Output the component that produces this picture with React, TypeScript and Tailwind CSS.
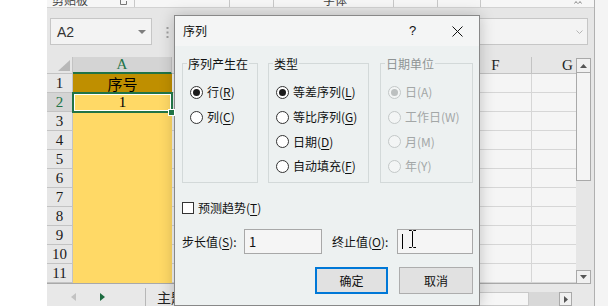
import React from "react";

const COLS = ["B", "C", "D", "E", "F", "G"];
const ROWS = [1, 2, 3, 4, 5, 6, 7, 8, 9, 10, 11];

function Ul({ children }: { children: React.ReactNode }) {
  return <span className="underline underline-offset-[2px] decoration-[1px]">{children}</span>;
}

function Radio({
  checked = false,
  disabled = false,
  children,
}: {
  checked?: boolean;
  disabled?: boolean;
  children: React.ReactNode;
}) {
  return (
    <div className="flex items-center h-[24.7px]">
      <span
        className={
          disabled
            ? "flex items-center justify-center w-[13px] h-[13px] shrink-0 rounded-full border border-[#c3c8c8] bg-[#f3f5f5]"
            : "flex items-center justify-center w-[13px] h-[13px] shrink-0 rounded-full border border-[#333333] bg-white"
        }
      >
        {checked ? (
          <span className={disabled ? "w-[7px] h-[7px] rounded-full bg-[#bcc0c0]" : "w-[7px] h-[7px] rounded-full bg-[#1b1b1b]"} />
        ) : null}
      </span>
      <span
        className={
          disabled
            ? "ml-[4px] leading-[16px] text-[#a3a7a7] whitespace-nowrap"
            : "ml-[4px] leading-[16px] text-[#111] whitespace-nowrap"
        }
      >
        {children}
      </span>
    </div>
  );
}

function Group({
  title,
  disabled = false,
  className,
  children,
}: {
  title: string;
  disabled?: boolean;
  className: string;
  children: React.ReactNode;
}) {
  return (
    <div className={"relative h-[120px] shrink-0 border border-[#d3d9d9] pt-[16px] pl-[7px] " + className}>
      <span
        className={
          disabled
            ? "absolute left-[4px] -top-[9px] px-[1px] bg-[#edf1f1] leading-[17px] text-[#8f9494] whitespace-nowrap"
            : "absolute left-[4px] -top-[9px] px-[1px] bg-[#edf1f1] leading-[17px] text-[#111] whitespace-nowrap"
        }
      >
        {title}
      </span>
      {children}
    </div>
  );
}

function RibbonStrip() {
  return (
    <div className="h-[8px] shrink-0 flex items-end overflow-hidden bg-[#f6f6f6] border-b border-[#d2d2d2] text-[12px] leading-[14px] text-[#444] font-['Noto_Sans_CJK_SC',sans-serif]">
      <span className="ml-[5px] whitespace-nowrap">剪贴板</span>
      <svg className="ml-[32px] mb-[2px]" width="7" height="6" viewBox="0 0 7 6">
        <path d="M0.5 0.5 H4 M0.5 0.5 V5.5 H6.5 V2" stroke="#777" fill="none" />
      </svg>
      <span className="ml-[7px] w-px h-full bg-[#c8c8c8]" />
      <span className="ml-[94px] w-px h-full bg-[#c8c8c8]" />
      <span className="ml-[43px] w-px h-full bg-[#c8c8c8]" />
      <span className="ml-[49px] whitespace-nowrap">字体</span>
      <span className="ml-[46px] w-px h-full bg-[#c8c8c8]" />
      <span className="ml-[43px] w-px h-full bg-[#c8c8c8]" />
      <span className="ml-[42px] w-px h-full bg-[#c8c8c8]" />
      <svg className="ml-[93px] mb-[3px]" width="8" height="4" viewBox="0 0 8 4">
        <path d="M0.5 3.5 L2 1.5 L3.5 3.5 M4.5 3.5 L6 1.5 L7.5 3.5" stroke="#888" fill="none" />
      </svg>
    </div>
  );
}

function FormulaBar() {
  return (
    <div className="h-[49px] shrink-0 flex items-start pt-[10px]">
      <div className="ml-[3px] w-[102px] h-[27px] flex items-center border border-[#c6c6c6] bg-[#f3f3f3] pl-[6px]">
        <span className="text-[14px] leading-[16px] text-[#333] font-['Liberation_Sans',Arial,sans-serif]">A2</span>
        <svg className="ml-auto mr-[5px]" width="8" height="4" viewBox="0 0 8 4">
          <path d="M0 0 H8 L4 4 Z" fill="#7e7e7e" />
        </svg>
      </div>
      <svg className="ml-[14px] mt-[9px]" width="3" height="11" viewBox="0 0 3 11">
        <rect x="0.5" y="0" width="2" height="2" fill="#a0a0a0" />
        <rect x="0.5" y="4.5" width="2" height="2" fill="#a0a0a0" />
        <rect x="0.5" y="9" width="2" height="2" fill="#a0a0a0" />
      </svg>
      <div className="ml-[10px] mr-[6px] flex-1 h-[27px] flex items-center justify-end border border-[#c6c6c6] bg-[#f3f3f3] pr-[4px]">
        <svg width="7" height="4" viewBox="0 0 7 4">
          <path d="M0.5 0.5 L3.5 3.5 L6.5 0.5" stroke="#b5b5b5" fill="none" />
        </svg>
      </div>
    </div>
  );
}

function Sheet() {
  return (
    <div className="w-[529px] h-[227px] shrink-0 overflow-hidden border-b border-[#a9a9a9]">
      <div className="grid w-[557px] grid-cols-[26px_99px_repeat(6,72px)] grid-rows-[17px_repeat(11,19px)]">
        <div className="relative bg-[#e6e6e6] border-r border-b border-[#c3c3c3]">
          <svg className="absolute right-[2px] bottom-[2px]" width="12" height="11" viewBox="0 0 12 11">
            <path d="M12 0 L12 11 L0 11 Z" fill="#b8b8b8" />
          </svg>
        </div>
        <div className="flex items-center justify-center bg-[#d4d4d4] border-r border-[#c3c3c3] border-b-2 border-b-[#217346] text-[15px] leading-none text-[#217346] font-['Liberation_Serif',serif]">
          A
        </div>
        {COLS.map((c) => (
          <div
            key={c}
            className="flex items-center justify-center bg-[#e6e6e6] border-r border-b border-[#c3c3c3] text-[15px] leading-none text-[#222] font-['Liberation_Serif',serif]"
          >
            {c}
          </div>
        ))}
        {ROWS.map((r) => (
          <React.Fragment key={r}>
            <div
              className={
                r === 2
                  ? "flex items-center justify-center bg-[#d4d4d4] border-r border-b border-[#c3c3c3] text-[15px] leading-none text-[#217346] font-['Liberation_Serif',serif]"
                  : "flex items-center justify-center bg-[#e6e6e6] border-r border-b border-[#c3c3c3] text-[15px] leading-none text-[#1a1a1a] font-['Liberation_Serif',serif]"
              }
            >
              {r}
            </div>
            {r === 1 ? (
              <div className="flex items-center justify-center bg-[#bf8f00] text-[15px] leading-none text-black font-['Noto_Sans_CJK_SC',sans-serif]">
                序号
              </div>
            ) : r === 2 ? (
              <div className="relative flex items-center justify-center bg-[#ffd966] text-[15px] leading-none text-black font-['Liberation_Serif',serif]">
                1
                <div className="absolute z-10 -left-[1px] -top-[1px] w-[101px] h-[21px] border-2 border-[#217346] shadow-[inset_0_0_0_1px_#ffffff]">
                  <div className="absolute left-[94px] top-[15px] w-[7px] h-[7px] bg-[#217346] border border-white" />
                </div>
              </div>
            ) : (
              <div className="bg-[#ffd966]" />
            )}
            {COLS.map((c) => (
              <div key={c} className="bg-[#f5f5f5] border-r border-b border-[#d6d6d6]" />
            ))}
          </React.Fragment>
        ))}
      </div>
    </div>
  );
}

function VScroll() {
  return (
    <div className="w-[15px] h-[227px] shrink-0 flex flex-col pt-[1px] bg-[#e6e6e6]">
      <div className="h-[15px] shrink-0 flex items-center justify-center border border-[#a9a9a9] bg-[#f0f0f0]">
        <svg width="7" height="4" viewBox="0 0 7 4">
          <path d="M0 4 L3.5 0 L7 4 Z" fill="#555" />
        </svg>
      </div>
      <div className="h-[108px] shrink-0 border-x border-b border-[#a9a9a9] bg-[#f4f4f4]" />
      <div className="flex-1" />
      <div className="h-[14px] shrink-0 flex items-center justify-center border border-[#a9a9a9] bg-[#f0f0f0]">
        <svg width="7" height="4" viewBox="0 0 7 4">
          <path d="M0 0 L7 0 L3.5 4 Z" fill="#555" />
        </svg>
      </div>
    </div>
  );
}

function TabBar() {
  return (
    <div className="h-[22px] shrink-0 flex items-start bg-[#e8e8e8]">
      <div className="w-[98px] h-full shrink-0 flex items-start pt-[9px] pl-[24px]">
        <svg width="5" height="8" viewBox="0 0 5 8">
          <path d="M5 0 L0 4 L5 8 Z" fill="#c2c2c2" />
        </svg>
        <svg className="ml-[24px]" width="5" height="8" viewBox="0 0 5 8">
          <path d="M0 0 L5 4 L0 8 Z" fill="#1d6b40" />
        </svg>
      </div>
      <div className="w-px h-[18px] mt-[4px] bg-[#b7b7b7]" />
      <span className="ml-[11px] mt-[2px] text-[14px] leading-[22px] text-[#222] whitespace-nowrap font-['Noto_Sans_CJK_SC',sans-serif]">
        主题
      </span>
      <div className="ml-auto mr-[22px] mt-[8px] flex h-[14px]">
        <div className="w-[100px] bg-[#f6f6f6] border border-[#c9c9c9]" />
        <div className="w-[30px] bg-[#d8d8d8]" />
        <div className="w-[13px] flex items-center justify-center border border-[#a9a9a9] bg-[#f0f0f0]">
          <svg width="4" height="7" viewBox="0 0 4 7">
            <path d="M0 0 L4 3.5 L0 7 Z" fill="#555" />
          </svg>
        </div>
      </div>
    </div>
  );
}

function Dialog() {
  return (
    <div className="absolute left-[174px] top-[15px] w-[306px] h-[291px] flex flex-col border border-[#888888] bg-[#edf1f1] shadow-[0_0_14px_rgba(0,0,0,0.22)] text-[12px] text-[#111] font-['Noto_Sans_CJK_SC',sans-serif]">
      <div className="h-[30px] shrink-0 flex items-center bg-[#f4f5f5]">
        <span className="flex-1 pl-[8px] leading-[16px]">序列</span>
        <span className="w-[45px] text-center text-[13px] leading-[16px] font-['Liberation_Sans',Arial,sans-serif]">?</span>
        <span className="w-[44px] flex justify-center">
          <svg width="11" height="11" viewBox="0 0 11 11">
            <path d="M0.5 0.5 L10.5 10.5 M10.5 0.5 L0.5 10.5" stroke="#111" strokeWidth="1" />
          </svg>
        </span>
      </div>
      <div className="flex-1 flex flex-col pl-[7px] pr-[6px] pt-[17px]">
        <div className="flex">
          <Group title="序列产生在" className="w-[76px]">
            <Radio checked>
              行(<Ul>R</Ul>)
            </Radio>
            <Radio>
              列(<Ul>C</Ul>)
            </Radio>
          </Group>
          <Group title="类型" className="w-[101px] ml-[10px]">
            <Radio checked>
              等差序列(<Ul>L</Ul>)
            </Radio>
            <Radio>
              等比序列(<Ul>G</Ul>)
            </Radio>
            <Radio>
              日期(<Ul>D</Ul>)
            </Radio>
            <Radio>
              自动填充(<Ul>F</Ul>)
            </Radio>
          </Group>
          <Group title="日期单位" disabled className="w-[93px] ml-[11px]">
            <Radio checked disabled>
              日(A)
            </Radio>
            <Radio disabled>工作日(W)</Radio>
            <Radio disabled>月(M)</Radio>
            <Radio disabled>年(Y)</Radio>
          </Group>
        </div>
        <div className="mt-[16px] h-[17px] flex items-center">
          <span className="w-[12px] h-[12px] shrink-0 border border-[#333333] bg-white" />
          <span className="ml-[4px] leading-[16px] whitespace-nowrap">
            预测趋势(<Ul>T</Ul>)
          </span>
        </div>
        <div className="mt-[13px] h-[25px] flex items-center">
          <span className="w-[62px] shrink-0 leading-[16px] whitespace-nowrap">
            步长值(<Ul>S</Ul>):
          </span>
          <div className="w-[78px] h-[25px] shrink-0 flex items-center border border-[#a8a8a8] bg-[#f5f5f5] pl-[4px]">
            <span className="text-[13px] leading-[16px]">1</span>
          </div>
          <span className="ml-[10px] w-[65px] shrink-0 leading-[16px] whitespace-nowrap">
            终止值(<Ul>O</Ul>):
          </span>
          <div className="relative w-[76px] h-[25px] shrink-0 border border-[#a8a8a8] bg-[#f5f5f5]">
            <span className="absolute left-[4px] top-[4px] w-px h-[15px] bg-black" />
            <svg className="absolute left-[10px] top-[0px]" width="9" height="18" viewBox="0 0 9 18">
              <path d="M1 0.5 H3.5 L4.5 1.5 L5.5 0.5 H8 M4.5 1.5 V16 M1 17.5 H3.5 L4.5 16.5 L5.5 17.5 H8" stroke="#000" fill="none" strokeWidth="1" />
            </svg>
          </div>
        </div>
        <div className="mt-[13px] h-[27px] flex justify-end">
          <div className="w-[73px] h-[27px] flex items-center justify-center border-2 border-[#0078d7] bg-[#e1e1e1] leading-[16px]">
            确定
          </div>
          <div className="ml-[11px] w-[74px] h-[27px] flex items-center justify-center border border-[#adadad] bg-[#e1e1e1] leading-[16px]">
            取消
          </div>
        </div>
      </div>
    </div>
  );
}

export default function App() {
  return (
    <div className="relative flex w-[608px] h-[306px] overflow-hidden bg-white">
      <div className="w-[47px] shrink-0 bg-white" />
      <div className="w-[548px] shrink-0 flex flex-col bg-[#e6e6e6] border-r border-[#b0b0b0]">
        <RibbonStrip />
        <FormulaBar />
        <div className="flex h-[227px] shrink-0">
          <Sheet />
          <VScroll />
        </div>
        <TabBar />
      </div>
      <div className="flex-1 bg-[#f4f4f4]" />
      <Dialog />
    </div>
  );
}
